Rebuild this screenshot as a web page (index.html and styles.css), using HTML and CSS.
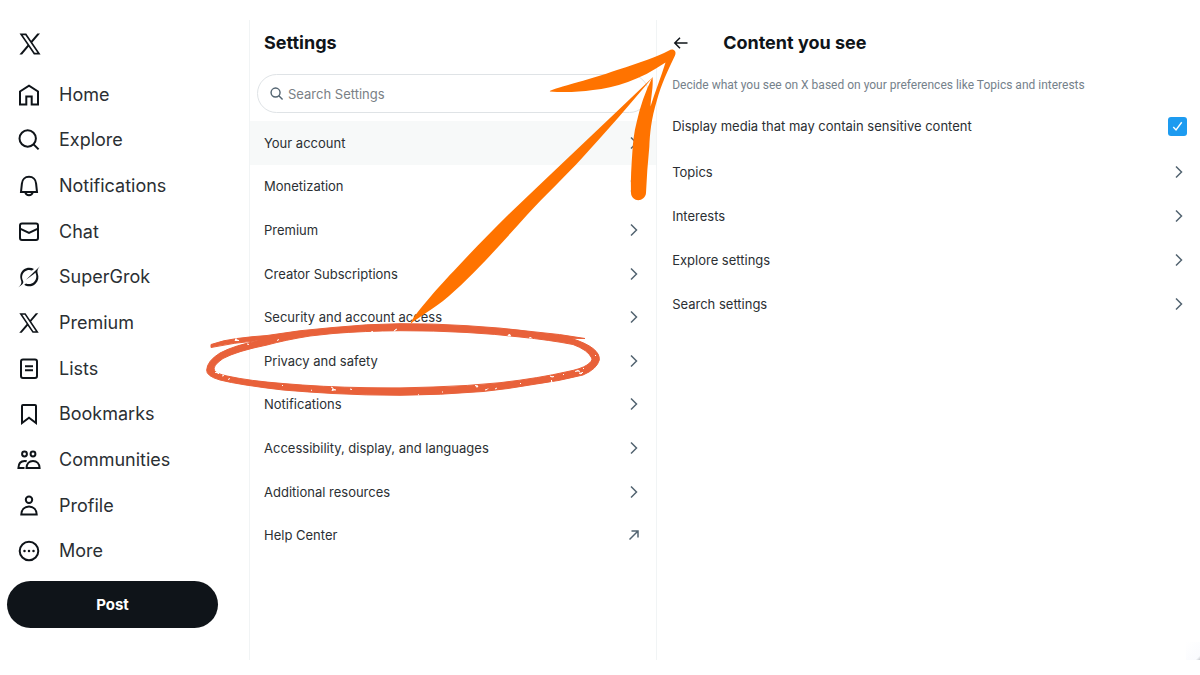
FILE: index.html
```html
<!DOCTYPE html>
<html lang="en">
<head>
    <meta charset="UTF-8">
    <meta name="viewport" content="width=device-width, initial-scale=1.0">
    <title>Content you see / X</title>
    <link rel="stylesheet" href="styles.css">
</head>
<body>
    <svg class="sprite" aria-hidden="true">
        <symbol id="x-logo" viewBox="0 0 24 24">
            <path fill="currentColor" d="M21.742 21.75l-7.563-11.179 7.056-8.321h-2.456l-5.691 6.714-4.54-6.714H2.359l7.29 10.776L2.25 21.75h2.456l6.035-7.118 4.818 7.118h6.191zM7.739 3.818L18.81 20.182h-2.447L5.29 3.818z"/>
        </symbol>
        <symbol id="chevron" viewBox="0 0 16 16">
            <path d="M5 2.500l5.500 5.500L5 13.500"/>
        </symbol>
    </svg>

    <div class="page">
        <header class="sidebar">
            <a class="logo" href="#" aria-label="X"><svg class="icon logo-icon"><use href="#x-logo"/></svg></a>
            <nav class="nav">
                <a href="#">
                    <svg class="icon" viewBox="0 0 24 24"><path d="M3 21.500V8.500l9-5.800 9 5.800v13h-6.300v-8H9.300v8z"/></svg>
                    Home
                </a>
                <a href="#">
                    <svg class="icon" viewBox="0 0 24 24"><circle cx="10.700" cy="10.500" r="8.200"/><path d="M16.600 16.400l5 5"/></svg>
                    Explore
                </a>
                <a href="#">
                    <svg class="icon" viewBox="0 0 24 24"><path d="M12 2.800c-4 0-6.800 2.900-7.100 6.800L4 18h16l-.9-8.400C18.800 5.700 16 2.800 12 2.800z"/><path d="M8.300 18.500c.5 1.700 1.900 2.700 3.700 2.700s3.200-1 3.700-2.700"/></svg>
                    Notifications
                </a>
                <a href="#">
                    <svg class="icon" viewBox="0 0 24 24"><rect x="3" y="3.500" width="18" height="16.500" rx="2"/><path d="M3 8.700l9 4.300 9-4.300"/></svg>
                    Chat
                </a>
                <a href="#">
                    <svg class="icon solid" viewBox="0 0 24 24"><path d="M1.300 22.500c2-2 3.600-3.900 3-6.300C2.200 11.300 3.500 7 6.700 4.600c3-2.200 6.900-2.300 10.300-.6l-2 1.500C12.300 4.500 9.700 5 7.800 6.600c-2.900 2.500-3.400 6.100-1.700 9.300 1.300 2.600-2.500 4.600-4.800 6.600z"/><path d="M22.900 1.200L9 14.700l8.300-6 .9-1.200c1.900 3.200 1.300 7.100-1.200 9.500-2.300 2.200-5.300 2.600-8 1.500l-1.800 1.300c3.500 2.300 8.100 2.100 11.300-1 3-3 3.600-6.600 2.200-10.400-.9-2.500.1-4.700 2.200-7.200z"/></svg>
                    SuperGrok
                </a>
                <a href="#">
                    <svg class="icon"><use href="#x-logo"/></svg>
                    Premium
                </a>
                <a href="#">
                    <svg class="icon" viewBox="0 0 24 24"><rect x="4" y="2.500" width="16" height="18.500" rx="2"/><path d="M8 9.200h8M8 13.200h8"/></svg>
                    Lists
                </a>
                <a href="#">
                    <svg class="icon" viewBox="0 0 24 24"><path d="M5 4c0-.6.400-1 1-1h12c.6 0 1 .4 1 1v17l-7-5.200L5 21z"/></svg>
                    Bookmarks
                </a>
                <a href="#">
                    <svg class="icon" viewBox="0 0 24 24"><circle cx="7.500" cy="6" r="2.400"/><circle cx="16" cy="6" r="2.400"/><path d="M9.500 20c.1-4.300 2.700-7 6.500-7s6.500 2.700 6.600 7z"/><path d="M7.500 20H1.400c.1-4.100 2.300-7 6.300-7 .8 0 1.400.1 2 .3"/></svg>
                    Communities
                </a>
                <a href="#">
                    <svg class="icon" viewBox="0 0 24 24"><circle cx="12" cy="5.700" r="3.200"/><path d="M4.300 20.500c.2-4.700 3.200-8 7.700-8s7.500 3.300 7.700 8z"/></svg>
                    Profile
                </a>
                <a href="#">
                    <svg class="icon" viewBox="0 0 24 24"><circle cx="12" cy="12" r="9.300"/><path class="dots" d="M7.500 12h.01M12 12h.01M16.500 12h.01"/></svg>
                    More
                </a>
            </nav>
            <button class="post" type="button">Post</button>
        </header>

        <section class="settings">
            <h2>Settings</h2>
            <label class="search">
                <svg class="search-icon" viewBox="0 0 16 16"><circle cx="7" cy="7" r="4.800"/><path d="M10.500 10.500l4 4"/></svg>
                <input type="search" placeholder="Search Settings" aria-label="Search Settings">
            </label>
            <nav class="settings-list">
                <a class="row active" href="#">Your account <svg class="chevron"><use href="#chevron"/></svg></a>
                <a class="row" href="#">Monetization <svg class="chevron"><use href="#chevron"/></svg></a>
                <a class="row" href="#">Premium <svg class="chevron"><use href="#chevron"/></svg></a>
                <a class="row" href="#">Creator Subscriptions <svg class="chevron"><use href="#chevron"/></svg></a>
                <a class="row" href="#">Security and account access <svg class="chevron"><use href="#chevron"/></svg></a>
                <a class="row" href="#">Privacy and safety <svg class="chevron"><use href="#chevron"/></svg></a>
                <a class="row" href="#">Notifications <svg class="chevron"><use href="#chevron"/></svg></a>
                <a class="row" href="#">Accessibility, display, and languages <svg class="chevron"><use href="#chevron"/></svg></a>
                <a class="row" href="#">Additional resources <svg class="chevron"><use href="#chevron"/></svg></a>
                <a class="row" href="#">Help Center <svg class="chevron" viewBox="0 0 16 16"><path d="M3.500 12.500l8-8M5.500 4h6.500v6.500"/></svg></a>
            </nav>
        </section>

        <main class="detail">
            <div class="detail-header">
                <button class="back" type="button" aria-label="Back"><svg viewBox="0 0 16 16"><path d="M14.500 8H2M7 2.800L1.800 8 7 13.200"/></svg></button>
                <h2>Content you see</h2>
            </div>
            <p class="hint">Decide what you see on X based on your preferences like Topics and interests</p>
            <label class="row check-row">
                Display media that may contain sensitive content
                <input class="check" type="checkbox" checked>
            </label>
            <a class="row" href="#">Topics <svg class="chevron"><use href="#chevron"/></svg></a>
            <a class="row" href="#">Interests <svg class="chevron"><use href="#chevron"/></svg></a>
            <a class="row" href="#">Explore settings <svg class="chevron"><use href="#chevron"/></svg></a>
            <a class="row" href="#">Search settings <svg class="chevron"><use href="#chevron"/></svg></a>
        </main>

        <!-- hand-drawn arrow and circle over the columns -->
        <svg class="marks" viewBox="0 0 1200 675" aria-hidden="true">
            <g class="ring">
                <path fill-rule="evenodd" d="M211 344.500Q224 340 237 338.500Q252 336.500 267 335.500Q300 330 333 327.500Q367 324 400 323.700Q434 323.500 467 325.700Q500 327.500 533 331.700Q560 334 585 338.500L571 338.300Q586 343 593 348.500Q600 354 599.300 360Q597 369 583 375Q560 381 533 384.500Q508 389 483 391.500Q440 395 400 395.300Q366 395.300 333 393.500Q307 392 283 390Q240 385 220 380Q206 376 206.700 370Q207 361 220 353Q235 345 260 340.500Q234 342.500 211 347.500ZM310 336Q285 340 267 345Q237 351 223 358.500Q212 366 214.500 370.500Q217 374 227 376Q250 381 283 383.500Q322 387 367 387.700Q400 388.500 433 387Q468 386 500 382.700Q540 378 567 371.700Q581 369 587 365Q593 361 591.700 358Q588 350 573 344.500Q550 340 520 337Q495 334 467 332.500Q434 330.500 400 330.700Q364 331 333 333.500Z"/>
                <path class="speck" d="M235 340.500l1-2 1 1.500 2 .5zM247 344l2 .5M277 340.500l2-1M371 332l2-.5M394 331.500l1-1.500 2-1M508 335.500l1.500-1.500 1 2zM529 338l2-.5 1 1M215 372.500l2-.5 2 2M222 376l2-.5M228 379.500l2-1M282 385l1 1M311 390.500l1-.5M332 391l1-2.500 1 1 2 .5M331 387l2 1M350 389l2 .5M418 395l1-.5M442 392h1M475 385.500l3 .5-1 1.500M485 390l2-.5 1-1M495 389l2-1M520 384l1-1M550 376l2 1 2-.5M551 380l1 1-1 2M563 374l1 1M575 371.500l3-1 2 1M579 373l2 1 2-2M583 368l1 1M595 355l1 1"/>
            </g>
            <g class="arrow">
                <path d="M411 323.500C408 322 438 287 457 267.500C474 249 491 232 508 215C556 169 605 123 653 77C630 104 607 131 583 157C564 178 545 195 527 215C500 245 471 278 443 301C430 311 419 317 411 323.500Z"/>
                <path d="M550 91.500C547 89.500 590 80 617 70C642 62 656 57 669 50.500C673 48 677 51 675 55.500C668 70 661 85 657 100C651 120 650 133 649.300 147Q647 170 646 193C645 202.500 631.500 202.500 631 193C630.500 178 631.500 165 632.300 153C633 142 634 132 636.700 122C640 107 645 92 652.500 77C653.500 87 651 96 650.500 106.500C655 92 661 77 665.500 62.500C640 80 615 88 593 90C577 92.500 561 92.300 550 91.500Z"/>
            </g>
        </svg>
        <span class="drawer"></span>
    </div>
</body>
</html>
```
FILE: styles.css
```css
* {
    box-sizing: border-box;
}
body {
    margin: 0;
    font-family: 'Inter', 'Liberation Sans', sans-serif;
    font-size: 13px;
    line-height: 20px;
    color: #2b2f33;
    background: #fff;
}
a {
    color: inherit;
    text-decoration: none;
}
h2 {
    margin: 0;
    font-size: 18px;
    font-weight: 700;
    line-height: 24px;
    color: #0f1419;
}
svg {
    flex: none;
    fill: none;
    stroke: currentColor;
    stroke-width: 2;
}
.sprite {
    position: absolute;
    width: 0;
    height: 0;
}
.page {
    position: relative;
    display: grid;
    grid-template-columns: 250px 3fr 4fr;
    min-height: 100vh;
    padding: 20px 0 15px;
}
.sidebar {
    display: flex;
    flex-direction: column;
    padding: 0 31px 32px 7px;
    border-right: 1px solid #f1f4f5;
}
.logo {
    display: flex;
    align-items: center;
    height: 48px;
    margin-bottom: 4px;
    padding-left: 10px;
    color: #0f1419;
}
.icon {
    width: 24px;
    height: 24px;
    color: #0f1419;
}
.icon use {
    stroke: none;
}
.logo-icon {
    width: 26px;
    height: 26px;
}
.solid {
    fill: currentColor;
    stroke: none;
}
.dots {
    stroke-width: 2.500;
    stroke-linecap: round;
}
.nav {
    display: flex;
    flex: 1;
    flex-direction: column;
}
.nav a {
    display: flex;
    flex: 1;
    align-items: center;
    gap: 18px;
    padding-left: 10px;
    font-size: 18px;
    line-height: 24px;
}
.post {
    height: 47px;
    margin-top: 7px;
    border: none;
    border-radius: 24px;
    font: 700 15px/20px 'Inter', 'Liberation Sans', sans-serif;
    color: #fff;
    background: #0f1419;
    cursor: pointer;
}
.settings {
    display: flex;
    flex-direction: column;
    padding: 11px 0 103px;
    border-right: 1px solid #f1f4f5;
}
.settings h2 {
    padding: 0 14px;
}
.search {
    display: flex;
    align-items: center;
    gap: 4px;
    height: 39px;
    margin: 19px 7px 8px;
    padding: 0 11px;
    border: 1px solid #dfe3e6;
    border-radius: 20px;
}
.search-icon {
    width: 15px;
    height: 15px;
    color: #536471;
    stroke-width: 1.500;
}
.search input {
    flex: 1;
    min-width: 0;
    padding: 0;
    border: none;
    outline: none;
    font: inherit;
    color: inherit;
    background: none;
}
.search input::placeholder {
    color: #7a8085;
    opacity: 1;
}
.settings-list {
    display: flex;
    flex: 1;
    flex-direction: column;
}
.row {
    display: flex;
    align-items: center;
    justify-content: space-between;
    min-height: 40px;
    padding: 0 14px;
}
.settings-list .row {
    flex: 1;
}
.active {
    background: #f7f9f9;
}
.chevron {
    width: 16px;
    height: 16px;
    color: #536471;
    stroke-width: 1.500;
}
.detail {
    padding: 11px 0 11px 1px;
}
.detail-header {
    display: flex;
    align-items: center;
    gap: 33px;
    padding: 0 14px;
}
.back {
    display: flex;
    padding: 0;
    border: none;
    color: #0f1419;
    background: none;
    cursor: pointer;
}
.back svg {
    width: 18px;
    height: 16px;
    stroke-width: 1.500;
}
.hint {
    margin: 20px 14px 9px;
    font-family: 'Roboto', 'Liberation Sans', sans-serif;
    font-size: 12px;
    color: #75818b;
}
.detail .row {
    height: 44px;
    padding-right: 13px;
}
.check-row {
    margin-bottom: 2px;
}
.check {
    appearance: none;
    width: 19px;
    height: 19px;
    margin: 0;
    border-radius: 3px;
    background: #1d9bf0 url("data:image/svg+xml,%3Csvg xmlns='http://www.w3.org/2000/svg' viewBox='0 0 18 18' fill='none' stroke='white' stroke-width='1.300'%3E%3Cpath d='M5 9.500l2.600 2.800L13 5'/%3E%3C/svg%3E");
}
.marks {
    position: absolute;
    top: 0;
    left: 0;
    width: 100%;
    pointer-events: none;
    stroke: none;
}
.ring {
    fill: #e8613a;
    stroke: #e8613a;
    stroke-width: 1;
}
.speck {
    fill: #fff;
    stroke: #fff;
}
.arrow {
    fill: #ff7300;
}
.drawer {
    position: absolute;
    right: 0;
    bottom: 15px;
    width: 14px;
    height: 18px;
    background: linear-gradient(135deg, #fff, #fafbfe 85%, #c4c6cc);
}
```
